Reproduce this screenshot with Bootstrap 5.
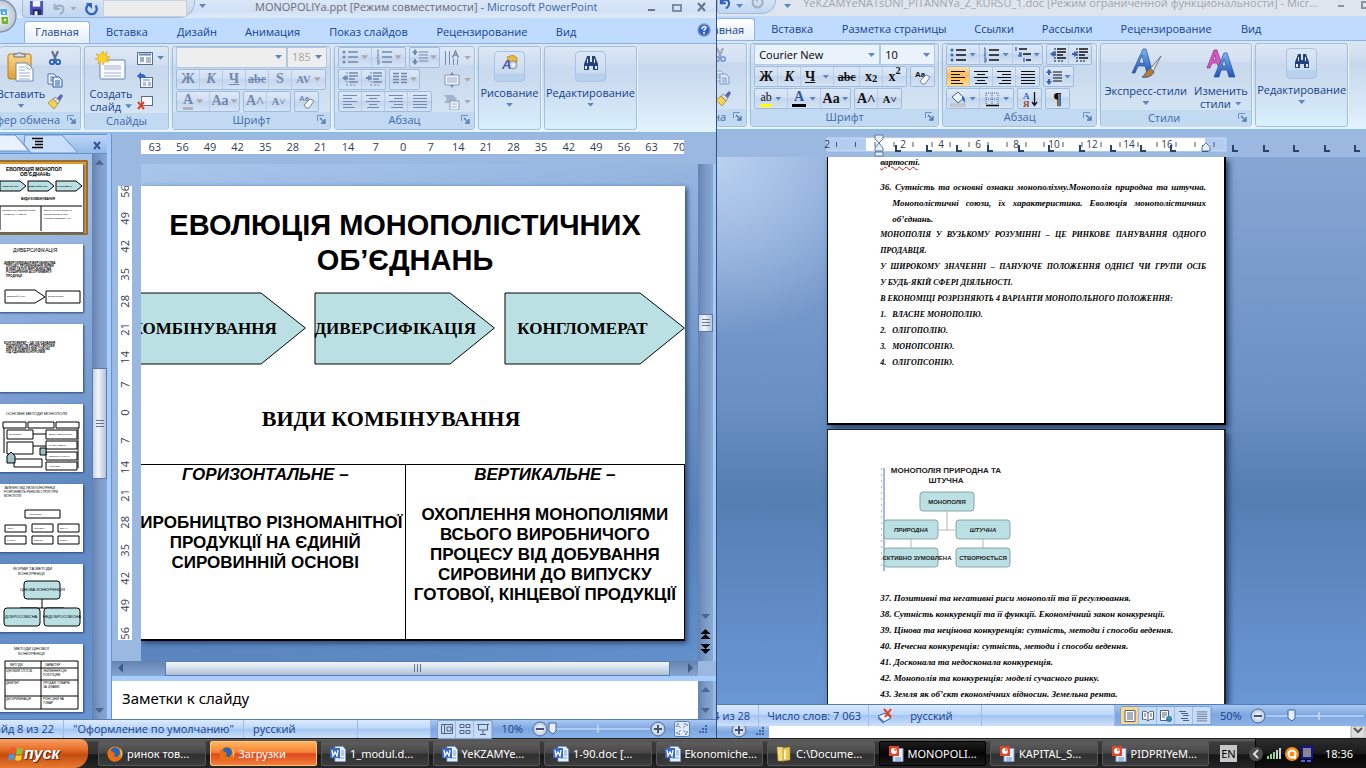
<!DOCTYPE html>
<html lang="ru">
<head>
<meta charset="utf-8">
<meta name="viewport" content="width=device-width, initial-scale=1">
<title>MONOPOLIYa.ppt - Microsoft PowerPoint</title>
<link href="https://cdn.jsdelivr.net/npm/bootstrap@5.3.0/dist/css/bootstrap.min.css" rel="stylesheet">
<style>
  :root { --ink:#15428b; --edge:#8db2e3; --ui:"Open Sans","Noto Sans",sans-serif; --tah:"Noto Sans","Open Sans",sans-serif; }
  body { font:11px/16px var(--ui); color:var(--ink); background:#6f9bd6; overflow:hidden; }
  svg { display:block; flex-shrink:0; }
  button, select { font:inherit; color:inherit; }
  button { border:0; background:none; padding:0; }
  .i16 { width:16px; height:16px; }
  .i32 { width:32px; height:32px; }
  .lh1 { line-height:14px; }
  .stack { display:flex; flex-direction:column; gap:6px; padding-top:3px; }
  .ppt { flex:0 0 717px; width:52.5%; border-right:1px solid #33517d; background:#bfdbff; }
  .word { background:#bfdbff; }
  /* title bars */
  .titlebar { background:linear-gradient(#dbe8f8,#d0e0f4 60%,#e0ebf9); border-bottom:1px solid #c4d9f3; }
  .ppt .titlebar { height:20px; color:#6c6c74; }
  .word .titlebar { height:17px; background:#dfe5ee; color:#a2a5aa; }
  .qat { height:18px; border:1px solid #9fbbe0; border-top:0; border-radius:0 0 16px 4px; background:linear-gradient(#d5e4f6,#c2d6f0); }
  .orb { left:-18px; top:-3px; width:36px; height:38px; z-index:2; }
  .fieldgray { height:17px; width:84px; background:#ececec; border:1px solid #c4d0de; appearance:none; }
  /* ribbon tabs */
  .tabs { height:25px; background:#bfdbff; border-bottom:1px solid #8db2e3; }
  .word .tabs { height:24px; }
  .tabs button { height:22px; color:var(--ink); white-space:nowrap; }
  .tabs .on { background:linear-gradient(#fff,#e4eefa); border:1px solid #8db2e3; border-bottom:0; border-radius:3px 3px 0 0; }
  /* ribbon */
  .ribbon { height:90px; padding:2px 0 2px 0; gap:3px; background:linear-gradient(#dbe6f4,#cfdded 20%,#c7d8ed 25%,#dbeaf9 80%,#e3f4ff); border-bottom:2px solid #8fbbe2; }
  .grp { border:1px solid #a0c0dc; border-radius:3px; background:linear-gradient(#dee8f5,#d3e0f1 20%,#c7d8ed 24%,#d8e8f5); box-shadow:1px 1px 0 #eef5fc; flex-shrink:0; }
  .grp > footer { height:17px; line-height:16px; background:#c1d9f1; color:#3e6aaa; text-align:center; position:relative; white-space:nowrap; flex-shrink:0; }
  .launch { position:absolute; right:4px; top:3px; width:9px; height:9px; }
  .g-body { padding:0 3px; }
  .tools { display:inline-flex; height:21px; border:1px solid #9ebce0; border-radius:2px; background:linear-gradient(#dce8f7,#d0dff2 45%,#c3d5ec 50%,#d5e4f5); }
  .tools > button { width:23px; display:flex; align-items:center; justify-content:center; border-right:1px solid #b5cbe8; }
  .tools > button:last-child { border-right:0; }
  .tools > .wide { width:33px; gap:3px; }
  .tools > .mid { width:29px; gap:2px; }
  .tools .hot { background:linear-gradient(#fde0a8,#fdb75c 45%,#ffe08a); }
  .rows { display:flex; flex-direction:column; gap:1px; }
  .rows > div { display:flex; gap:3px; height:21px; }
  .dim { color:#7288ae; --c1:#7288ae; --c2:#7288ae; }
  .lit { color:#111; --c1:#111; --c2:#3563bd; }
  .car { width:7px; height:4px; background:#5d86bd; clip-path:polygon(0 0,100% 0,50% 100%); flex-shrink:0; }
  .dim .car { background:#a9a9ae; }
  .ser { font:bold 14px/18px "Liberation Serif",serif; }
  .combo { appearance:none; height:21px; border:1px solid #b0c8e6; border-radius:0; padding:0 4px; background:#eaf2fb url("data:image/svg+xml,%3Csvg xmlns='http://www.w3.org/2000/svg' width='7' height='4'%3E%3Cpath d='M0 0h7L3.5 4z' fill='%235d86bd'/%3E%3C/svg%3E") no-repeat right 4px center; color:#000; }
  .combo:disabled { background-color:#eee; color:#a5a5a5; opacity:1; }
  .big { display:flex; flex-direction:column; align-items:center; text-align:center; line-height:13px; color:var(--ink); white-space:nowrap; }
  .tile { width:31px; height:31px; border:1px solid #a9c3e0; border-radius:4px; background:linear-gradient(#dbe7f5,#cbdcf0 70%,#b8d1ec 75%); display:flex; align-items:center; justify-content:center; padding-bottom:6px; }
  .tall { background:linear-gradient(#dee8f5,#c9d9ee 28%,#cfe0f2 60%,#d8f0fc); }
  /* outline pane */
  .pane { flex:0 0 107px; }
  .pane-head { height:20px; background:linear-gradient(#bcd6f7,#93b9e8); border-top:1px solid #6593cf; border-bottom:1px solid #6593cf; }
  .thumbs { flex:1 1 0; background:linear-gradient(165deg,#a9c6eb,#7ca0d2 40%,#5f88c0 60%,#6894d0); padding-top:6px; }
  .thumbs svg { width:85px; height:68px; margin-left:-2px; background:#fff; box-shadow:1px 1px 2px #2c4a78; font-family:"Liberation Sans",sans-serif; }
  .thumbs .slot { height:80px; padding-top:4px; }
  .thumbs .sel { height:75px; width:88px; border:2px solid #96702e; border-left:0; background:#e59a36; margin-bottom:5px; padding-top:2px; border-radius:0 2px 2px 0; }
  .vbar { width:15px; flex-shrink:0; background:linear-gradient(90deg,#6583b0,#7b9ac8 50%,#88a8d4); display:flex; flex-direction:column; align-items:center; padding:6px 0; }
  .arr { width:9px; height:5px; background:#4a668f; clip-path:polygon(50% 0,100% 100%,0 100%); flex-shrink:0; }
  .arr.dn { transform:rotate(180deg); }
  .grip { background:linear-gradient(90deg,#c5d2e2,#f2f6fa 40%,#b3c3d8); border:1px solid #5d7aa8; width:15px; display:flex; align-items:center; justify-content:center; flex-shrink:0; }
  .split { flex:0 0 5px; background:#a9cdff; border-right:1px solid #6593cf; }
  /* slide area */
  .ruler-bg { background:#9ab8e0; }
  .hruler { height:14px; background:#fff; overflow:hidden; }
  .hruler > div { width:552px; display:flex; line-height:14px; font-size:11px; color:#333c52; }
  .hruler span { flex:1; text-align:center; }
  .vruler { width:14px; flex-shrink:0; background:#fff; overflow:hidden; display:flex; align-items:center; margin:22px 9px 21px 6px; }
  .vruler > div { height:470px; width:14px; flex-shrink:0; display:flex; flex-direction:column; font-size:11px; color:#333c52; }
  .vruler span { flex:1; width:14px; text-align:center; writing-mode:vertical-rl; transform:rotate(180deg); line-height:14px; }
  .canvas { background:linear-gradient(170deg,#a9c6eb,#7b9fd0 40%,#5680b8 75%,#6390cb); padding:22px 13px 20px 0; min-width:0; }
  .slide { background:#fff; overflow:hidden; color:#000; box-shadow:2px 2px 5px #26456f; border-bottom:1px solid #000; }
  .slide-in { margin-left:-16px; }
  .slide h1 { font:bold 29px/35px "Liberation Sans",sans-serif; text-align:center; padding-top:22px; margin:0; }
  .slide h2 { font:bold 22px/28px "Liberation Serif",serif; text-align:center; padding-right:28px; margin:40px 0 31px; }
  .chev { height:73px; font:bold 17px/73px "Liberation Serif",serif; position:relative; flex:1 1 0; min-width:0; text-align:center; padding-right:24px; white-space:nowrap; }
  .chev svg { position:absolute; inset:0; width:100%; height:100%; z-index:0; }
  .chev span { position:relative; }
  .kinds { width:100%; table-layout:fixed; border-collapse:collapse; font:bold 17px/20px "Liberation Sans",sans-serif; text-align:center; }
  .kinds td { border:1px solid #000; vertical-align:top; height:175px; padding:0; white-space:nowrap; }
  .hbar { height:16px; background:linear-gradient(#6583b0,#86a5d2); }
  .hgrip { height:15px; background:linear-gradient(#f0f5fa,#d8e2ee 40%,#aebfd6); border:1px solid #5d7aa8; }
  .notes { height:38px; background:#fff; color:#000; font:15px/34px var(--tah); }
  /* status bars */
  .status { background:linear-gradient(#dcebff,#bdd6f8 45%,#a4c5f2 50%,#cce0fb); border-top:1px solid #567db1; color:var(--ink); white-space:nowrap; flex-shrink:0; }
  .status > div { border-right:1px solid #9ebce5; height:100%; display:flex; align-items:center; flex-shrink:0; }
  .status > .flex-grow-1 { flex-shrink:1; }
  .zoomer { background:linear-gradient(#a8c8f2,#7da6e0 50%,#8db4ea); }
  .views { border:1px solid #7fa3d2; border-radius:2px; background:#c6dcf7; display:flex; }
  .views button { width:18px; height:17px; display:flex; align-items:center; justify-content:center; border-right:1px solid #9bbce6; color:#51617c; }
  /* word document */
  .desk { background:radial-gradient(circle at 0 0,#bad2f1 0,transparent 180px),linear-gradient(#86a6d4,#6a8fc3 45%,#557eb2 62%,#6a97d5); padding:0 140px 0 110px; overflow:hidden; }
  .sheet { background:#fff; color:#000; border:1px solid #000; border-width:0 2px 2px 1px; box-shadow:3px 3px 6px #223f69; padding:0 18px 0 52px; font:italic bold 9px/16px "Liberation Serif",serif; }
  .sheet p { margin:0; text-align:justify; text-align-last:left; }
  .sheet .fill { text-align-last:justify; white-space:nowrap; }
  .caps { font-size:8px; }
  .sheet ol { margin:0; padding:0; list-style:none; white-space:nowrap; }
  .num { display:inline-block; width:12px; }
  /* taskbar */
  .taskbar { height:30px; flex-shrink:0; background:linear-gradient(#6a6a6a,#3c3c3c 12%,#333 50%,#151515 55%,#262626); border-top:1px solid #1c1c1c; font:11px/16px var(--tah); color:#fff; }
  .start { width:88px; border-radius:0 8px 14px 0; background:linear-gradient(#f7a166,#e8702a 35%,#c44d10 55%,#e87a30); color:#fff; font:italic bold 16px/20px "Liberation Sans",sans-serif; text-shadow:1px 1px 1px #421; }
  .task { flex:1 1 0; min-width:0; height:25px; display:flex; align-items:center; gap:4px; padding-left:8px; border:1px solid #555; border-radius:2px; background:linear-gradient(#5d5d5d,#484848 48%,#303030 52%,#3c3c3c); color:#fff; white-space:nowrap; overflow:hidden; }
  .task.alert-on { background:linear-gradient(#ffb55a,#f6813a 45%,#e0481d 52%,#f0803a); border-color:#ffc27a; }
  .task.now { background:linear-gradient(#1d1d1d,#050505 50%,#1a1a1a); border-color:#000; }
  .tray { background:linear-gradient(#2c2c2c,#1a1a1a 50%,#050505 55%,#111); border-left:1px solid #000; }
  .lang { background:#c8c8c8; color:#000; width:17px; height:17px; font-size:11px; line-height:17px; text-align:center; }
</style>
</head>
<body class="vh-100 d-flex flex-column">

<svg width="0" height="0" class="position-absolute" aria-hidden="true">
  <defs>
    <linearGradient id="gy" x2="0" y2="1"><stop stop-color="#fbd98a"/><stop offset="1" stop-color="#e0a030"/></linearGradient>
    <linearGradient id="gb" x2="0" y2="1"><stop stop-color="#7db4f2"/><stop offset="1" stop-color="#2353b5"/></linearGradient>
    <radialGradient id="gw"><stop stop-color="#fff"/><stop offset="1" stop-color="#b9c6d8"/></radialGradient>
  </defs>
  <symbol id="save" viewBox="0 0 16 16"><path d="M1 0h14v15H2l-1-1z" fill="#4a50b8"/><path d="M4 0h8v6H4z" fill="#eef3fb"/><path d="M4 9h9v6H4z" fill="#222a66"/><path d="M6 11h3v4H6z" fill="#fff"/></symbol>
  <symbol id="undo" viewBox="0 0 16 16"><path d="M3 2v6h6" fill="none" stroke="currentColor" stroke-width="2.4"/><path d="M4 7c2-4 9-4 9 1 0 3-2 5-4 6" fill="none" stroke="currentColor" stroke-width="2.4"/></symbol>
  <symbol id="redo" viewBox="0 0 16 16"><path d="M4 3a6 6 0 1 0 8 1" fill="none" stroke="currentColor" stroke-width="2.6"/><path d="M1 1h7v7z" fill="currentColor"/></symbol>
  <symbol id="paste" viewBox="0 0 32 32"><rect x="3" y="3" width="23" height="25" rx="2" fill="url(#gy)" stroke="#b67c22"/><path d="M9 5V3h3a3 3 0 0 1 5 0h3v3H9z" fill="#d9dde2" stroke="#646c76"/><path d="M11 12h11l6 6v12H11z" fill="#fff" stroke="#6b89b5"/><path d="M22 12v6h6M14 16h6m-6 3h6m-6 3h11m-11 3h11m-11 3h11" fill="none" stroke="#8fb0d8"/></symbol>
  <symbol id="cut" viewBox="0 0 16 16"><path d="M5 1l4 9M11 1L7 10" stroke="#5d6f8c" stroke-width="2" fill="none"/><circle cx="5" cy="12" r="2.2" fill="none" stroke="#2a5fc0" stroke-width="1.8"/><circle cx="11" cy="12" r="2.2" fill="none" stroke="#2a5fc0" stroke-width="1.8"/></symbol>
  <symbol id="copy" viewBox="0 0 16 16"><path d="M1 2h6l3 3v7H1z" fill="#fff" stroke="#4472b8"/><path d="M3 5h3m-3 2h5m-5 2h5" stroke="#4472b8"/><path d="M6 5h6l3 3v7H6z" fill="#e9f2ff" stroke="#2a5cae"/><path d="M8 9h5m-5 2h5m-5 2h5" stroke="#2a5cae"/></symbol>
  <symbol id="brush" viewBox="0 0 16 16"><path d="M1 9l5-4 5 5-4 5c-2-2-4-4-6-6z" fill="#f3d24e" stroke="#9f7d1c" stroke-width=".7"/><path d="M6 5l2-2 5 4-2 3z" fill="#d8dce2" stroke="#666" stroke-width=".6"/><path d="M10 4l4-4 2 2-3 5z" fill="#5d63b5"/></symbol>
  <symbol id="newslide" viewBox="0 0 32 32"><rect x="5" y="9" width="25" height="19" rx="1" fill="#f8fbff" stroke="#6d83a7"/><path d="M9 14h17v5H9z" fill="#cdd7e8"/><path d="M9 22h17m-17 3h17" stroke="#a7b6d0"/><path d="M8 0l1 4 3-3-1 4 4 1-4 2 3 3-4-1-2 4-1-4-4 3 1-4-4-1 4-2-3-3 4 1z" fill="#ffd32a" stroke="#e39d00" stroke-width=".6"/></symbol>
  <symbol id="layout" viewBox="0 0 16 16"><rect x=".5" y="2.500" width="15" height="12" fill="#f4f8fd" stroke="#5a6c8c"/><path d="M2 4.500h12" stroke="#6a86b6" stroke-width="2"/><path d="M3 7h4v5H3z" fill="#9dacc5"/><path d="M9 8h5m-5 2h5m-5 2h5" stroke="#6a7c9c"/></symbol>
  <symbol id="reset" viewBox="0 0 16 16"><rect x="3.500" y="5.500" width="12" height="10" fill="#f4f8fd" stroke="#5a6c8c"/><path d="M6 8h7m-7 3h3m2 0h3m-8 2h3m2 0h3" stroke="#6a86b6"/><path d="M0 4l4-4v2c4 0 5 2 5 5-1-2-2-2-5-2v3z" fill="#2d67c9"/></symbol>
  <symbol id="del" viewBox="0 0 16 16"><rect x="4.500" y="2.500" width="11" height="9" fill="#f4f8fd" stroke="#5a6c8c"/><path d="M1 8l6 7M7 8l-6 7" stroke="#e33d20" stroke-width="2"/></symbol>
  <symbol id="launch" viewBox="0 0 9 9"><path d="M.5 6V.5H7" fill="none" stroke="#6d92c4"/><path d="M3 3l4 4M8 4v4H4" fill="none" stroke="#4d76b0" stroke-width="1.400"/></symbol>
  <symbol id="bul" viewBox="0 0 16 16"><path d="M6 3h10M6 8h10M6 13h10" stroke="var(--c1)" stroke-width="1.300"/><g fill="var(--c2)"><circle cx="2" cy="3" r="1.500"/><circle cx="2" cy="8" r="1.500"/><circle cx="2" cy="13" r="1.500"/></g></symbol>
  <symbol id="numl" viewBox="0 0 16 16"><path d="M6 3h10M6 8h10M6 13h10" stroke="var(--c1)" stroke-width="1.300"/><path d="M1 1h1v4M1 6h2L1 9h2M1 11h2v2H1m2 0v2H1" stroke="var(--c2)" fill="none"/></symbol>
  <symbol id="multi" viewBox="0 0 16 16"><path d="M4 2h8M8 7h8M11 13h5" stroke="var(--c1)" stroke-width="1.300"/><path d="M1 0v4M4 6h2v3H4V8h2M9 11v4" stroke="var(--c2)" fill="none" stroke-width="1.300"/></symbol>
  <symbol id="sp" viewBox="0 0 16 16"><path d="M7 3h9M7 6h9M7 9h9M7 12h9" stroke="var(--c1)" stroke-width="1.200"/><path d="M3 0l3 4H4v2H2V4H0zM3 16l3-4H4v-2H2v2H0z" fill="var(--c2)"/></symbol>
  <symbol id="al" viewBox="0 0 16 16"><path d="M1 2.500h14M1 5.500h9M1 8.500h14M1 11.500h9M1 14.500h12" stroke="currentColor"/></symbol>
  <symbol id="ac" viewBox="0 0 16 16"><path d="M1 2.500h14M4 5.500h8M1 8.500h14M4 11.500h8M2 14.500h12" stroke="currentColor"/></symbol>
  <symbol id="ar" viewBox="0 0 16 16"><path d="M1 2.500h14M6 5.500h9M1 8.500h14M6 11.500h9M3 14.500h12" stroke="currentColor"/></symbol>
  <symbol id="aj" viewBox="0 0 16 16"><path d="M1 2.500h14M1 5.500h14M1 8.500h14M1 11.500h14M1 14.500h14" stroke="currentColor"/></symbol>
  <symbol id="out" viewBox="0 0 16 16"><path d="M7 2h9M7 5h9M7 8h6M7 11h9" stroke="var(--c1)" stroke-width="1.500"/><path d="M5 1v14M8 14h5" stroke="var(--c1)" stroke-dasharray="2 1"/><path d="M0 7l4-3v2h2v2H4v2z" fill="var(--c2)"/></symbol>
  <symbol id="in" viewBox="0 0 16 16"><path d="M7 2h9M7 5h9M7 8h6M7 11h9" stroke="var(--c1)" stroke-width="1.500"/><path d="M5 1v14M8 14h5" stroke="var(--c1)" stroke-dasharray="2 1"/><path d="M6 7L2 4v2H0v2h2v2z" fill="var(--c2)"/></symbol>
  <symbol id="cols" viewBox="0 0 16 16"><path d="M1 2.500h6M1 5.500h6M1 8.500h6M1 11.500h6M9 2.500h6M9 5.500h6M9 8.500h6M9 11.500h6" stroke="currentColor" stroke-width="1.500"/></symbol>
  <symbol id="tdir" viewBox="0 0 16 16"><path d="M1.500 1v14M5.500 1v14M9.500 9v6M13.500 9v6" stroke="currentColor"/><path d="M8.500 8L11.500 1l3 7M9.500 5h4" fill="none" stroke="currentColor" stroke-width="1.300"/></symbol>
  <symbol id="valign" viewBox="0 0 16 16"><path d="M1 3h14v10H1z" fill="#eef4fb" stroke="#8798b5"/><path d="M3 6h10M3 8h10M3 10h10" stroke="#9aabc5"/><path d="M8 0l2 3H6zM8 16l2-3H6z" fill="currentColor"/></symbol>
  <symbol id="smart" viewBox="0 0 16 16"><path d="M0 1h9l4 4-4 4H0l3-4z" fill="#a4b3cd"/><path d="M6 7h9v9H6z" fill="#f0f5fb" stroke="#8a9bb8"/><path d="M8 10h5m-5 3h5" stroke="#9aabc5"/></symbol>
  <symbol id="clear" viewBox="0 0 16 16"><text x="0" y="8" font-size="8" font-weight="bold" font-family="Liberation Sans,sans-serif" fill="currentColor">Aa</text><path d="M5 12l6-6 4 2-5 7H7z" fill="#f8fafd" stroke="#7385a5"/></symbol>
  <symbol id="draw" viewBox="0 0 16 16"><path d="M5 2l6-2 4 3v4H7z" fill="#e8b93a" stroke="#9a741b" stroke-width=".6"/><circle cx="11" cy="10" r="4" fill="url(#gw)" stroke="#6b7380" stroke-width=".6"/><text x="0" y="14" font-size="13" font-weight="bold" font-style="italic" font-family="Liberation Sans,sans-serif" fill="#4c57b8">A</text></symbol>
  <symbol id="bino" viewBox="0 0 16 16"><path d="M1 15V9l2-5 1-3h3v6h2V1h3l1 3 2 5v6h-5v-4H6v4z" fill="#24437d"/><path d="M2 11h2v3H2zm10 0h2v3h-2zM4 4h1v4H4zm7 0h1v4h-1z" fill="#e4eefc"/></symbol>
  <symbol id="bigA" viewBox="0 0 32 32"><path d="M2 25L13 1h3l7 24h-6l-2-7H8l-3 7zm7-10h5l-2-8z" fill="url(#gb)" stroke="#2a5598" stroke-width=".7"/><path d="M31 8L20 21l3 3z" fill="#d9dee5" stroke="#747b85"/><path d="M20 20l4 4c-2 4-6 6-12 5 3-1 3-5 8-9z" fill="#c07a30" stroke="#315b9b"/></symbol>
  <symbol id="twoA" viewBox="0 0 32 32"><path d="M2 20L9 2h3l6 18h-4l-2-5H7l-2 5zm6-8h3l-1-5z" fill="#d458c0" stroke="#8e2a80" stroke-width=".7"/><path d="M9 29L19 5h3l8 24h-6l-2-7h-6l-2 7zm8-11h4l-2-7z" fill="url(#gb)" stroke="#2a5598" stroke-width=".7"/></symbol>
  <symbol id="bucket" viewBox="0 0 16 16"><path d="M2 6l6-5 6 6-6 5z" fill="#eef4fb" stroke="#49628c"/><path d="M12 5c3 1 3 4 3 7l-3-4z" fill="#2d62bf"/><path d="M0 13h15v3H0z" fill="#cfcfcf" stroke="#999" stroke-width=".5"/></symbol>
  <symbol id="bord" viewBox="0 0 16 16"><path d="M2 2h12v12M2 2v12M8 2v12M2 8h12" fill="none" stroke="#4b69a0" stroke-dasharray="1 1"/><path d="M2 14.500h13" stroke="#000" stroke-width="1.500"/></symbol>
  <symbol id="sort" viewBox="0 0 16 16"><text x="1" y="8" font-size="9" font-weight="bold" font-family="Liberation Serif,serif" fill="#2c5cc0">А</text><text x="1" y="16" font-size="9" font-weight="bold" font-family="Liberation Serif,serif" fill="#a03d2c">Я</text><path d="M12.500 1v13M10 11l2.500 3.500L15 11" fill="none" stroke="#111" stroke-width="1.300"/></symbol>
  <symbol id="docv" viewBox="0 0 12 12"><path d="M1 .5h10v11H1z" fill="#fff" stroke="currentColor"/><path d="M3 3h6M3 5h6M3 7h6M3 9h6" stroke="currentColor"/></symbol>
  <symbol id="normv" viewBox="0 0 12 12"><path d="M.5 1.500h11v9H.5zM3.500 2v8M6 4h4v4H6z" fill="none" stroke="currentColor"/></symbol>
  <symbol id="sortv" viewBox="0 0 12 12"><path d="M1 1.500h4v3H1zM7 1.500h4v3H7zM1 7.500h4v3H1zM7 7.500h4v3H7z" fill="none" stroke="currentColor"/></symbol>
  <symbol id="showv" viewBox="0 0 12 12"><path d="M0 1.500h12M1.500 2v5h9V2M6 7v4M3 11.500h6" fill="none" stroke="currentColor"/></symbol>
  <symbol id="bookv" viewBox="0 0 12 12"><path d="M6 3C4 1 2 1 .5 1.500v8C2 9 4 9 6 11c2-2 4-2 5.500-1.500v-8C10 1 8 1 6 3zv8M2 4h2M2 6h2M8 4h2M8 6h2" fill="#fff" stroke="currentColor"/></symbol>
  <symbol id="webv" viewBox="0 0 12 12"><path d="M.5.5h8v10h-8z" fill="#fff" stroke="currentColor"/><path d="M2 3h5M2 5h5M2 7h3" stroke="currentColor"/><circle cx="9" cy="9" r="3" fill="#2d7fc0"/><path d="M8 7l2 1-1 2z" fill="#56b24a"/></symbol>
  <symbol id="outv" viewBox="0 0 12 12"><path d="M1 1.500h7M3 3.500h7M5 5.500h6M3 8.500h7M5 10.500h6" stroke="currentColor"/></symbol>
  <symbol id="minus" viewBox="0 0 16 16"><circle cx="8" cy="8" r="7" fill="url(#gw)" stroke="#4a6ca0"/><path d="M4 8h8" stroke="#3e5680" stroke-width="2"/></symbol>
  <symbol id="plus" viewBox="0 0 16 16"><circle cx="8" cy="8" r="7" fill="url(#gw)" stroke="#4a6ca0"/><path d="M4 8h8M8 4v8" stroke="#3e5680" stroke-width="2"/></symbol>
  <symbol id="fit" viewBox="0 0 16 16"><rect x=".5" y=".5" width="15" height="15" rx="2" fill="#dfeafb" stroke="#5a7db2"/><path d="M3 6V3h3M10 3h3v3M13 10v3h-3M6 13H3v-3M5 5l2 2M11 5L9 7M5 11l2-2M11 11L9 9" fill="none" stroke="#49607f" stroke-dasharray="2 1"/></symbol>
  <symbol id="size" viewBox="0 0 10 10"><path d="M7 1h2v2H7zM7 4h2v2H7zM4 4h2v2H4zM7 7h2v2H7zM4 7h2v2H4zM1 7h2v2H1z" fill="#3f68a8"/></symbol>
  <symbol id="ff" viewBox="0 0 16 16"><circle cx="8" cy="8" r="7.500" fill="#f08a1c"/><circle cx="8" cy="6.500" r="5" fill="#2c62b8"/><path d="M1 4c2 1 3 0 5 2l2 1-1 2c1 3 5 3 7 0 0 4-3 7-7 6.500C3 15 0 11 1 4z" fill="#e96f12"/><path d="M13 2c3 3 3 7 1 10 0-4 0-6-1-10z" fill="#fcc33c"/></symbol>
  <symbol id="wd" viewBox="0 0 16 16"><path d="M5 .5h8l2.500 3v12H5z" fill="#e9f1fd" stroke="#7e9ccb"/><path d="M11 5h3m-3 2h3m-3 2h3m-7 3h7" stroke="#7e9ccb"/><path d="M0 2h10v10H0z" fill="#3a69bd"/><path d="M2 4l1 6 2-4 2 4 1-6" fill="none" stroke="#fff" stroke-width="1.300"/></symbol>
  <symbol id="pp" viewBox="0 0 16 16"><path d="M5 2.500h10v13H5z" fill="#eaf1fb" stroke="#7e9ccb"/><path d="M7 12h6m-6 2h6" stroke="#5b89c8"/><path d="M1 0h10v10H1z" fill="#d9482a"/><circle cx="6" cy="5" r="3" fill="#fff"/><path d="M6 5V2a3 3 0 0 1 3 3z" fill="#e98b6c"/></symbol>
  <symbol id="fold" viewBox="0 0 16 16"><path d="M1 1h6l1 14H2z" fill="#f6dc7b" stroke="#a8873a" stroke-width=".6"/><path d="M7 2l7-1v13l-7 1z" fill="#ecc652" stroke="#a8873a" stroke-width=".6"/><path d="M9 4v9" stroke="#fff6c7" stroke-width="2"/></symbol>
  <symbol id="flag" viewBox="0 0 16 16"><path d="M2 2c2-1 4-1 6 0L7 8C5 7 3 7 1 8z" fill="#ef5a28"/><path d="M9 2c2 1 4 1 6 0l-1 6c-2 1-4 1-6 0z" fill="#8ac53e"/><path d="M1 9c2-1 4-1 6 0l-1 5C4 13 2 13 0 14z" fill="#4a9ae8"/><path d="M8 9c2 1 4 1 6 0l-1 5c-2 1-4 1-6 0z" fill="#fbcb2d"/></symbol>
</svg>

<main class="d-flex flex-grow-1" style="min-height:0">
  <!-- PowerPoint window -->
  <section class="ppt d-flex flex-column position-relative">
    <svg class="orb position-absolute" viewBox="0 0 36 38"><circle cx="18" cy="19" r="16" fill="url(#gw)" stroke="#8795ab" stroke-width="1.500"/><path d="M18 12h7v6h-6z" fill="#5aa9e8"/><path d="M19 20h7v7h-6z" fill="#77b82a"/><path d="M10 12h7v7h-7z" fill="#ef6b2a"/><path d="M21 15h2v2h-2zM22 22h2v2h-2z" fill="#fff"/></svg>
    <header class="titlebar d-flex align-items-start">
      <div class="qat d-flex align-items-center" style="margin-left:22px;width:173px;padding-left:6px">
        <button aria-label="Сохранить"><svg width="15" height="15"><use href="#save"/></svg></button>
        <button class="ms-2" aria-label="Отменить" style="color:#9fb0c8"><svg width="14" height="14"><use href="#undo"/></svg></button>
        <span class="dim ms-1"><i class="car d-block"></i></span>
        <button class="ms-2" aria-label="Повторить" style="color:#2f62b8"><svg width="14" height="14"><use href="#redo"/></svg></button>
        <select class="fieldgray ms-1" aria-label="Команда" disabled></select>
      </div>
      <i class="car mt-1 ms-1"></i>
      <div class="flex-grow-1 text-nowrap lh1" style="padding-left:49px">MONOPOLIYa.ppt [Режим совместимости] <span style="color:#3e6aaa">- Microsoft PowerPoint</span></div>
      <svg width="70" height="16" viewBox="0 0 70 16" fill="none" stroke="#66758d" stroke-width="2"><path d="M2 10h7"/><path d="M27 5h8v6h-8zM26 5h10" stroke-width="1.500"/><path d="M52 3l7 8M59 3l-7 8"/></svg>
    </header>
    <nav class="tabs d-flex align-items-end">
      <button class="on" style="margin-left:24px;width:66px">Главная</button>
      <button style="width:74px">Вставка</button><button style="width:66px">Дизайн</button>
      <button style="width:85px">Анимация</button><button style="width:107px">Показ слайдов</button>
      <button style="width:120px">Рецензирование</button><button style="width:48px">Вид</button>
      <button class="ms-auto me-1" aria-label="Справка"><svg width="16" height="20" viewBox="0 0 16 20"><circle cx="8" cy="8" r="6" fill="#2e62cf" stroke="#8795ad" stroke-width="1.500"/><path d="M6 7c0-3 4-3 4-1 0 1-2 1-2 3M8 10v2" fill="none" stroke="#fff" stroke-width="1.500"/></svg></button>
    </nav>
    <div class="ribbon d-flex">
      <div class="grp d-flex flex-column border-start-0" style="width:81px">
        <div class="flex-grow-1 d-flex justify-content-between">
          <div class="big" style="width:42px"><svg class="i32 mt-1"><use href="#paste"/></svg><span style="padding-top:4px">Вставить</span><i class="car mt-1"></i></div>
          <div class="stack" style="width:33px"><svg class="i16"><use href="#cut"/></svg><svg class="i16"><use href="#copy"/></svg><svg class="i16"><use href="#brush"/></svg></div>
        </div>
        <footer class="d-flex justify-content-end overflow-hidden" style="padding-right:20px">Буфер обмена<svg class="launch"><use href="#launch"/></svg></footer>
      </div>
      <div class="grp d-flex flex-column" style="width:85px">
        <div class="flex-grow-1 d-flex justify-content-between">
          <button class="big" style="width:54px"><svg class="i32 mt-1"><use href="#newslide"/></svg><span style="padding-top:4px">Создать</span><span class="d-flex align-items-center gap-1">слайд <i class="car"></i></span></button>
          <div class="stack" style="width:32px"><span class="d-flex align-items-center gap-1"><svg class="i16"><use href="#layout"/></svg><i class="car"></i></span><svg class="i16"><use href="#reset"/></svg><svg class="i16"><use href="#del"/></svg></div>
        </div>
        <footer>Слайды</footer>
      </div>
      <div class="grp d-flex flex-column dim" style="width:159px">
        <div class="g-body rows flex-grow-1">
          <div class="gap-0"><select class="combo" aria-label="Шрифт" disabled style="width:111px"></select><select class="combo" aria-label="Размер" disabled style="width:40px"><option>185</option></select></div>
          <div><div class="tools ser"><button>Ж</button><button><i>К</i></button><button><u>Ч</u></button><button><s style="font-size:12px">abc</s></button><button>S</button><button class="wide" style="font-size:11px">AV<i class="car"></i></button></div></div>
          <div><div class="tools ser"><button class="wide"><span style="border-bottom:3px solid #b0b0b0;line-height:14px">A</span><i class="car"></i></button><button class="mid">Aa<i class="car"></i></button></div><div class="tools ser"><button>A˄</button><button style="font-size:11px">A˅</button></div><div class="tools"><button><svg class="i16"><use href="#clear"/></svg></button></div></div>
        </div>
        <footer>Шрифт<svg class="launch"><use href="#launch"/></svg></footer>
      </div>
      <div class="grp d-flex flex-column dim" style="width:141px">
        <div class="d-flex g-body flex-grow-1 justify-content-between">
        <div class="rows">
          <div><div class="tools"><button class="wide"><svg class="i16"><use href="#bul"/></svg><i class="car"></i></button><button class="wide"><svg class="i16"><use href="#numl"/></svg><i class="car"></i></button></div><div class="tools"><button class="mid"><svg class="i16"><use href="#sp"/></svg><i class="car"></i></button></div></div>
          <div><div class="tools"><button><svg class="i16"><use href="#out"/></svg></button><button><svg class="i16"><use href="#in"/></svg></button></div><div class="tools"><button class="mid"><svg class="i16"><use href="#cols"/></svg><i class="car"></i></button></div></div>
          <div><div class="tools"><button><svg class="i16"><use href="#al"/></svg></button><button><svg class="i16"><use href="#ac"/></svg></button><button><svg class="i16"><use href="#ar"/></svg></button><button><svg class="i16"><use href="#aj"/></svg></button></div></div>
        </div>
        <div class="stack"><span class="d-flex align-items-center gap-1"><svg class="i16"><use href="#tdir"/></svg><i class="car"></i></span><span class="d-flex align-items-center gap-1"><svg class="i16"><use href="#valign"/></svg><i class="car"></i></span><span class="d-flex align-items-center gap-1"><svg class="i16"><use href="#smart"/></svg><i class="car"></i></span></div>
        </div>
        <footer>Абзац<svg class="launch"><use href="#launch"/></svg></footer>
      </div>
      <button class="grp tall big pt-1" style="width:63px"><span class="tile"><svg class="i16"><use href="#draw"/></svg></span><span class="pt-1">Рисование</span><i class="car mt-1"></i></button>
      <button class="grp tall big pt-1" style="width:93px"><span class="tile"><svg class="i16"><use href="#bino"/></svg></span><span class="pt-1">Редактирование</span><i class="car mt-1"></i></button>
    </div>

    <div class="d-flex flex-grow-1" style="min-height:0">
      <aside class="pane d-flex flex-column">
        <div class="pane-head"><svg width="106" height="18" viewBox="0 0 106 18"><path d="M-1 0h16l14 16H-1z" fill="#e8f2ff" stroke="#6593cf"/><path d="M25 0h37l16 18H31L24 9z" fill="#c9dff9" stroke="#6593cf"/><path d="M32 3.500h11M35 6.500h8M35 9.500h8M32 12.500h11" stroke="#000" stroke-width="1.500"/><path d="M94 7l6 7M100 7l-6 7" stroke="#33568f" stroke-width="2"/></svg></div>
        <div class="d-flex flex-grow-1" style="min-height:0">
          <div class="thumbs overflow-hidden">
            <div class="sel"><svg viewBox="0 0 85 68" font-size="5" font-weight="bold"><text x="8" y="7">ЕВОЛЮЦІЯ МОНОПОЛ</text><text x="22" y="12">ОБ’ЄДНАНЬ</text><g fill="#bbe0e3" stroke="#000"><path d="M2 17h20l6 5-6 5H2zM30 17h20l6 5-6 5H30zM58 17h20l6 5-6 5H58z"/></g><g font-size="2"><text x="4" y="23">КОМБІНУВАННЯ</text><text x="31" y="23">ДИВЕРСИФІКАЦІЯ</text><text x="59" y="23">КОНГЛОМЕРАТ</text></g><text x="23" y="36" font-size="3">ВИДИ КОМБІНУВАННЯ</text><path d="M2 66V42h82M43 42v25" fill="none" stroke="#000"/><g font-size="2" font-weight="normal"><text x="4" y="47">ГОРИЗОНТАЛЬНЕ ВИРОБНИЦТВО</text><text x="6" y="51">ПРОДУКЦІЇ НА ЄДИНІЙ</text><text x="46" y="47">ВЕРТИКАЛЬНЕ ОХОПЛЕННЯ</text><text x="46" y="51">ВСЬОГО ВИРОБНИЧОГО</text><text x="46" y="55">ПРОЦЕСУ ВІД ДОБУВАННЯ</text></g></svg></div>
            <div class="slot"><svg viewBox="0 0 85 68" font-size="5"><text x="15" y="8">ДИВЕРСИФІКАЦІЯ</text><g font-weight="bold" font-size="3"><text x="6" y="20">ДИВЕРСИФІКАЦІЯ ВИРОБНИЦТВА</text><text x="8" y="23">ПРОЦЕС ПРОНИКНЕННЯ ФІРМИ</text><text x="8" y="26">В ІНШІ ГАЛУЗІ ВИРОБНИЦТВА</text><text x="8" y="29">РОЗШИРЕННЯ АСОРТИМЕНТУ</text><text x="8" y="33">ПРОДУКЦІЇ</text></g><path d="M7 46h30l10 7-10 6H7zM48 47h34v12H48z" fill="none" stroke="#000"/><g font-size="2"><text x="9" y="53">ДИВЕРСИФІКАЦІЯ</text><text x="50" y="53">ВИРОБНИЦТВО</text></g></svg></div>
            <div class="slot"><svg viewBox="0 0 85 68" font-size="3" font-weight="bold"><text x="6" y="20">КОНГЛОМЕРАТ – ЦЕ ОБ’ЄДНАННЯ</text><text x="8" y="23">ПІДПРИЄМСТВ РІЗНИХ ГАЛУЗЕЙ</text><text x="8" y="26">НЕПОВ’ЯЗАНИХ МІЖ СОБОЮ</text><text x="8" y="29">ПІД ЄДИНИМ КОНТРОЛЕМ</text></svg></div>
            <div class="slot"><svg viewBox="0 0 85 68" font-size="4"><text x="8" y="11">ОСНОВНІ МЕТОДИ МОНОПОЛІЇ</text><path d="M5 18h23v6H5zM30 18h26v6H30zM58 18h23v6H58zM9 26h26v9H9zM9 38h26v12H9zM48 26h31v9H48zM48 37h31v8H48zM48 48h31v8H48zM48 58h31v8H48zM16 55h28v8H16zM6 24v25M80 24v40M35 30h13M35 42h13" fill="none" stroke="#000"/><path d="M42 44h6v7h-6zM9 52l4-4 4 4v7H9z" fill="#9bc2c5" stroke="#000"/><g font-size="2"><text x="11" y="31">ОЛІГОПОЛІЯ</text><text x="51" y="31">ВЕЛИКІ ПІДПРИЄМСТВА</text><text x="51" y="42">ЦІНОВА ПОЛІТИКА</text><text x="51" y="53">ОБМЕЖЕННЯ РИНКУ</text><text x="51" y="63">КОНТРОЛЬ</text></g></svg></div>
            <div class="slot"><svg viewBox="0 0 85 68" font-size="3"><text x="6" y="5">ЗАЛЕЖНО ВІД УМОВ КОНКУРЕНЦІЇ</text><text x="6" y="9">РОЗРІЗНЯЮТЬ РИНКОВІ СТРУКТУРИ</text><text x="6" y="13">МОНОПОЛІЇ</text><path d="M27 26h35v8H27zM7 41h21v7H7zM34 40h21v8H34zM60 40h21v8H60zM7 52h21v8H7zM34 52h21v8H34zM60 52h21v8H60z" fill="none" stroke="#000"/><g font-size="2"><text x="31" y="31">МОНОПОЛІЯ</text><text x="9" y="45">ЧИСТА</text><text x="36" y="45">ПРИРОДНА</text><text x="62" y="45">ШТУЧНА</text><text x="9" y="57">ЗАКРИТА</text><text x="36" y="57">ВІДКРИТА</text><text x="62" y="57">ПРОСТА</text></g></svg></div>
            <div class="slot"><svg viewBox="0 0 85 68" font-size="4"><text x="15" y="6">ФОРМИ ТА МЕТОДИ</text><text x="20" y="11">КОНКУРЕНЦІЇ</text><path d="M44 35v9M22 44h44M22 44v3M66 44v3" stroke="#000"/><g fill="#bbe0e3" stroke="#000"><rect x="26" y="17" width="36" height="18" rx="3"/><rect x="6" y="44" width="36" height="18" rx="3"/><rect x="46" y="44" width="36" height="18" rx="3"/></g><text x="22" y="27">ЦІНОВА КОНКУРЕНЦІЯ</text><text x="7" y="54">ДОБРОСОВІСНА</text><text x="45" y="54">НЕДОБРОСОВІСНА</text></svg></div>
            <div class="slot"><svg viewBox="0 0 85 68" font-size="4"><text x="16" y="6">МЕТОДИ ЦІНОВОЇ</text><text x="20" y="11">КОНКУРЕНЦІЇ</text><path d="M7 17h73v48H7zM43 17v48M7 24h73M7 36h73M7 52h73" fill="none" stroke="#000"/><g font-size="3"><text x="12" y="22">МЕТОДИ</text><text x="47" y="22">ХАРАКТЕР</text><text x="8" y="28">ЦІНОВИЙ СПОСІБ</text><text x="45" y="28">ЗНИЖЕННЯ ЦІН</text><text x="45" y="32">ПОКУПЦЯМ</text><text x="8" y="40">ДЕМПІНГ</text><text x="45" y="40">ПРОДАЖ ТОВАРІВ</text><text x="45" y="44">ЗА ЦІНАМИ</text><text x="8" y="56">ДИСКРИМІНАЦІЯ</text><text x="45" y="56">РІЗНІ ЦІНИ НА</text><text x="45" y="60">ТОВАР</text></g></svg></div>
          </div>
          <div class="vbar"><i class="arr"></i><div style="flex:2 1 0"></div><div class="grip" style="height:111px"><svg width="8" height="8"><path d="M0 .5h8M0 3.500h8M0 6.500h8" stroke="#65758d"/></svg></div><div style="flex:2 1 0;margin-top:25px"></div><i class="arr dn"></i></div>
        </div>
      </aside>
      <div class="split"></div>
      <div class="d-flex flex-column flex-grow-1 ruler-bg" style="min-width:0">
        <div style="padding:6px 32px 10px 29px"><div class="hruler"><div><span>63</span><span>56</span><span>49</span><span>42</span><span>35</span><span>28</span><span>21</span><span>14</span><span>7</span><span>0</span><span>7</span><span>14</span><span>21</span><span>28</span><span>35</span><span>42</span><span>49</span><span>56</span><span>63</span><span>70</span></div></div></div>
        <div class="d-flex flex-grow-1" style="min-height:0">
          <div class="vruler"><div><span>56</span><span>49</span><span>42</span><span>35</span><span>28</span><span>21</span><span>14</span><span>7</span><span>0</span><span>7</span><span>14</span><span>21</span><span>28</span><span>35</span><span>42</span><span>49</span><span>56</span></div></div>
          <div class="canvas flex-grow-1 overflow-hidden">
            <article class="slide h-100"><div class="slide-in">
              <h1>ЕВОЛЮЦІЯ МОНОПОЛІСТИЧНИХ<br>ОБ’ЄДНАНЬ</h1>
              <div class="d-flex gap-2" style="padding-top:14px">
                <div class="chev"><svg viewBox="0 0 184 73" preserveAspectRatio="none"><path d="M1 1h137l45 35-45 36H1z" fill="#bbe0e3" stroke="#000"/></svg><span>КОМБІНУВАННЯ</span></div>
                <div class="chev"><svg viewBox="0 0 184 73" preserveAspectRatio="none"><path d="M1 1h137l45 35-45 36H1z" fill="#bbe0e3" stroke="#000"/></svg><span>ДИВЕРСИФІКАЦІЯ</span></div>
                <div class="chev"><svg viewBox="0 0 184 73" preserveAspectRatio="none"><path d="M1 1h137l45 35-45 36H1z" fill="#bbe0e3" stroke="#000"/></svg><span>КОНГЛОМЕРАТ</span></div>
              </div>
              <h2>ВИДИ КОМБІНУВАННЯ</h2>
              <table class="kinds"><tr><td><i>ГОРИЗОНТАЛЬНЕ –</i><div style="padding-top:28px">ВИРОБНИЦТВО РІЗНОМАНІТНОЇ<br>ПРОДУКЦІЇ НА ЄДИНІЙ<br>СИРОВИННІЙ ОСНОВІ</div></td><td><i>ВЕРТИКАЛЬНЕ –</i><div style="padding-top:20px">ОХОПЛЕННЯ МОНОПОЛІЯМИ<br>ВСЬОГО ВИРОБНИЧОГО<br>ПРОЦЕСУ ВІД ДОБУВАННЯ<br>СИРОВИНИ ДО ВИПУСКУ<br>ГОТОВОЇ, КІНЦЕВОЇ ПРОДУКЦІЇ</div></td></tr></table>
            </div></article>
          </div>
          <div class="vbar"><i class="arr invisible"></i><div style="flex:140 1 0"></div><div class="grip" style="height:18px"><svg width="8" height="8"><path d="M0 .5h8M0 3.500h8M0 6.500h8" stroke="#65758d"/></svg></div><div style="flex:283 1 0"></div><i class="arr dn"></i><svg width="11" height="36" viewBox="0 0 11 36"><path d="M5.500 10l5 5h-10zM5.500 15l5 5h-10zM5.500 30l5-5h-10zM5.500 35l5-5h-10z" fill="#000"/></svg></div>
          <div style="width:3px;flex-shrink:0;background:#a5c8f5"></div>
        </div>
        <div class="hbar d-flex align-items-center" style="margin-right:18px"><svg width="53" height="12"><path d="M11 1v10L6 6z" fill="#3f5b86"/></svg><div class="hgrip flex-grow-1 d-flex justify-content-center align-items-center"><svg width="8" height="8"><path d="M.5 0v8M3.500 0v8M6.500 0v8" stroke="#65758d"/></svg></div><svg width="28" height="12"><path d="M18 1v10l5-5z" fill="#3f5b86"/></svg></div>
        <div style="height:5px;background:#a9cdff"></div>
        <div class="d-flex"><div class="notes flex-grow-1" style="padding-left:10px">Заметки к слайду</div><div class="vbar justify-content-between" style="margin-right:3px"><i class="arr"></i><i class="arr dn"></i></div></div>
      </div>
    </div>
    <footer class="status d-flex" style="height:19px">
      <div class="justify-content-end overflow-hidden" style="width:64px;padding-right:9px">Слайд 8 из 22</div>
      <div class="justify-content-center" style="width:180px">"Оформление по умолчанию"</div><div style="padding:0 9px;width:114px">русский</div><div class="flex-grow-1"></div>
      <div class="zoomer border-0" style="padding-left:6px"><div class="views"><button><svg width="12" height="12"><use href="#normv"/></svg></button><button><svg width="12" height="12"><use href="#sortv"/></svg></button><button><svg width="12" height="12"><use href="#showv"/></svg></button></div><span style="margin:0 9px 0 8px">10%</span><svg class="i16"><use href="#minus"/></svg><svg width="102" height="16" viewBox="0 0 102 16"><path d="M0 8h102M50 4v8" stroke="#e4efff"/><path d="M1 2h7v8l-3 3-4-3z" fill="#e8f0fb" stroke="#45679d"/></svg><svg class="i16"><use href="#plus"/></svg><svg class="i16 ms-2"><use href="#fit"/></svg><svg width="10" height="10" class="mx-2"><use href="#size"/></svg></div>
    </footer>
  </section>

  <!-- Word window -->
  <section class="word d-flex flex-column flex-grow-1" style="min-width:0">
    <header class="titlebar d-flex overflow-hidden">
      <div class="qat d-flex align-items-start flex-shrink-0" style="width:59px;height:14px"><svg width="14" height="10" viewBox="0 4 16 12" style="color:#2f62b8"><use href="#undo" width="16" height="16"/></svg><i class="car mt-1 ms-1"></i><svg width="14" height="10" class="ms-2" viewBox="0 5 16 12" style="color:#a5afbd"><use href="#redo" width="16" height="16"/></svg></div>
      <i class="car ms-2 mt-1"></i>
      <div class="flex-grow-1 text-nowrap" style="padding-left:12px;line-height:16px;margin-top:-5px">YeKZAMYeNATsDNI_PITANNYa_Z_KURSU_1.doc [Режим ограниченной функциональности] - Micr...</div>
      <svg width="30" height="16"><path d="M2 6h6M26 2h8v6h-8z" stroke="#8c939e" stroke-width="2" fill="none"/></svg>
    </header>
    <nav class="tabs d-flex align-items-end">
      <button class="on border-start-0 overflow-hidden d-flex justify-content-end align-items-center" style="width:38px;padding-right:10px">Главная</button>
      <button style="width:74px">Вставка</button><button style="width:130px">Разметка страницы</button><button style="width:70px">Ссылки</button>
      <button style="width:76px">Рассылки</button><button style="width:122px">Рецензирование</button><button style="width:48px">Вид</button>
    </nav>
    <div class="ribbon d-flex">
      <div class="grp d-flex flex-column border-start-0" style="width:30px">
        <div class="flex-grow-1 stack overflow-hidden"><svg class="i16 opacity-50" style="margin-left:-5px"><use href="#cut"/></svg><svg class="i16 opacity-50" style="margin-left:-3px"><use href="#copy"/></svg><svg class="i16" style="margin-left:-2px"><use href="#brush"/></svg></div>
        <footer class="d-flex justify-content-end overflow-hidden" style="padding-right:20px">Буфер обмена<svg class="launch"><use href="#launch"/></svg></footer>
      </div>
      <div class="grp d-flex flex-column lit" style="width:189px">
        <div class="g-body rows flex-grow-1">
          <div class="gap-0"><select class="combo" aria-label="Шрифт" style="width:126px"><option>Courier New</option></select><select class="combo" aria-label="Размер" style="width:55px"><option>10</option></select></div>
          <div><div class="tools ser"><button>Ж</button><button><i>К</i></button><button class="wide"><u>Ч</u><i class="car ms-1"></i></button><button style="width:26px"><s style="font-size:12px">abc</s></button><button>x<sub>2</sub></button><button>x<sup>2</sup></button></div><div class="tools"><button><svg class="i16"><use href="#clear"/></svg></button></div></div>
          <div><div class="tools ser"><button class="wide"><span style="border-bottom:3px solid #ff0;line-height:13px;font-size:12px;font-weight:normal;font-family:inherit">ab</span><i class="car"></i></button><button class="wide"><span style="border-bottom:3px solid #000;line-height:14px;color:#2f579c;padding:0 2px">A</span><i class="car"></i></button><button class="mid">Aa<i class="car"></i></button></div><div class="tools ser"><button>A˄</button><button style="font-size:11px">A˅</button></div></div>
        </div>
        <footer>Шрифт<svg class="launch"><use href="#launch"/></svg></footer>
      </div>
      <div class="grp d-flex flex-column lit" style="width:155px">
        <div class="g-body rows flex-grow-1">
          <div><div class="tools"><button class="wide"><svg class="i16"><use href="#bul"/></svg><i class="car"></i></button><button class="wide"><svg class="i16"><use href="#numl"/></svg><i class="car"></i></button><button class="mid"><svg class="i16"><use href="#multi"/></svg><i class="car"></i></button></div><div class="tools"><button style="width:22px"><svg class="i16"><use href="#out"/></svg></button><button style="width:22px"><svg class="i16"><use href="#in"/></svg></button></div></div>
          <div><div class="tools"><button class="hot"><svg class="i16"><use href="#al"/></svg></button><button><svg class="i16"><use href="#ac"/></svg></button><button><svg class="i16"><use href="#ar"/></svg></button><button><svg class="i16"><use href="#aj"/></svg></button></div><div class="tools"><button class="mid"><svg class="i16"><use href="#sp"/></svg><i class="car"></i></button></div></div>
          <div><div class="tools"><button class="wide"><svg class="i16"><use href="#bucket"/></svg><i class="car"></i></button><button class="wide"><svg class="i16"><use href="#bord"/></svg><i class="car"></i></button></div><div class="tools"><button><svg class="i16"><use href="#sort"/></svg></button></div><div class="tools ser"><button style="font-size:16px">¶</button></div></div>
        </div>
        <footer>Абзац<svg class="launch"><use href="#launch"/></svg></footer>
      </div>
      <div class="grp d-flex flex-column" style="width:152px">
        <div class="flex-grow-1 d-flex justify-content-around">
          <button class="big"><svg class="i32 mt-1"><use href="#bigA"/></svg><span class="pt-1">Экспресс-стили</span><i class="car mt-1"></i></button>
          <button class="big"><svg class="i32 mt-1"><use href="#twoA"/></svg><span class="pt-1">Изменить</span><span class="d-flex align-items-center gap-1">стили <i class="car"></i></span></button>
        </div>
        <footer class="pe-4">Стили<svg class="launch"><use href="#launch"/></svg></footer>
      </div>
      <button class="grp tall big pt-1" style="width:93px"><span class="tile"><svg class="i16"><use href="#bino"/></svg></span><span class="pt-1">Редактирование</span><i class="car mt-1"></i></button>
    </div>
    <div class="ruler-bg flex-shrink-0 overflow-hidden" style="height:26px;padding-left:100px">
      <svg width="549" height="26" viewBox="0 0 549 26" font-size="10" fill="#333c52" text-anchor="middle">
        <path d="M10 7h399v13H10z" fill="#b5cdf0" stroke="#c8dcf6"/><path d="M49 7h339v13H49z" fill="#fff"/>
        <path d="M19.500 11v5M38.500 11v5M58 11v5M77 11v5M96 11v5M115 11v5M133 11v5M152 11v5M171 11v5M190 11v5M209 11v5M227 11v5M246 11v5M265 11v5M284 11v5M303 11v5M321 11v5M340 11v5M359 11v5M378 11v5M397 11v5" stroke="#4a5770"/>
        <text x="10" y="17">2</text><text x="86" y="17">2</text><text x="124" y="17">4</text><text x="161" y="17">6</text><text x="199" y="17">8</text><text x="237" y="17">10</text><text x="275" y="17">12</text><text x="312" y="17">14</text><text x="350" y="17">16</text>
        <path d="M79 14v6h5M110 14v6h5M140 14v6h5M171 14v6h5M202 14v6h5M232 14v6h5M263 14v6h5M294 14v6h5M324 14v6h5M354 14v6h5M386 14v6h5M416 14v6h5M447 14v6h5M477 14v6h5M508 14v6h5M538 14v6h5" fill="none" stroke="#2a4265" stroke-width="2"/>
        <path d="M58 4h8v4l-4 4 4 5v3h-8v-3l4-5-4-4zM58 21h8v4h-8zM385 20v-4l4-4 4 4v4z" fill="#e9eff8" stroke="#5878a8"/>
      </svg>
    </div>
    <div class="desk flex-grow-1 d-flex flex-column" style="min-height:0">
      <div class="sheet flex-shrink-0" style="height:268px">
        <p style="height:22px;line-height:10px"><s style="text-decoration:underline wavy #c22">вартості</s>.</p>
        <p class="fill">36. Сутність та основні ознаки монополізму.Монополія природна та штучна.</p>
        <p class="fill" style="padding-left:12px">Монополістичні союзи, їх характеристика. Еволюція монополістичних</p>
        <p style="padding-left:12px">об’єднань.</p>
        <div class="caps">
        <p class="fill">МОНОПОЛІЯ У ВУЗЬКОМУ РОЗУМІННІ – ЦЕ РИНКОВЕ ПАНУВАННЯ ОДНОГО</p>
        <p>ПРОДАВЦЯ.</p>
        <p class="fill">У ШИРОКОМУ ЗНАЧЕННІ – ПАНУЮЧЕ ПОЛОЖЕННЯ ОДНІЄЇ ЧИ ГРУПИ ОСІБ</p>
        <p>У БУДЬ-ЯКІЙ СФЕРІ ДІЯЛЬНОСТІ.</p>
        <p>В ЕКОНОМІЦІ РОЗРІЗНЯЮТЬ 4 ВАРІАНТИ МОНОПОЛЬНОГО ПОЛОЖЕННЯ:</p>
        <ol><li><span class="num">1.</span>ВЛАСНЕ МОНОПОЛІЮ.</li><li><span class="num">2.</span>ОЛІГОПОЛІЮ.</li><li><span class="num">3.</span>МОНОПСОНІЮ.</li><li><span class="num">4.</span>ОЛІГОПСОНІЮ.</li></ol>
        </div>
      </div>
      <div class="sheet mt-1 flex-grow-1 border-top border-dark border-bottom-0" style="padding-top:38px;min-height:0">
        <svg width="131" height="103" viewBox="0 0 131 103" font-family="Liberation Sans,sans-serif" font-weight="bold" font-style="normal" text-anchor="middle" fill="#222" font-size="6">
          <path d="M1.500 0v102" stroke="#bbb" stroke-dasharray="2 4"/><path d="M4 0v103" stroke="#a0b8e8" stroke-width="2"/>
          <g font-size="8"><text x="66" y="5">МОНОПОЛІЯ ПРИРОДНА ТА</text><text x="66" y="15">ШТУЧНА</text></g>
          <path d="M67 42v20M58 62h17M31 71v9M103 71v9" stroke="#b5b5b5"/>
          <g fill="#bbe0e3" stroke="#8aa6a8"><rect x="40" y="24" width="54" height="19" rx="3"/><rect x="4" y="52" width="54" height="19" rx="3"/><rect x="76" y="52" width="54" height="19" rx="3"/><rect x="4" y="80" width="54" height="19" rx="3"/><rect x="76" y="80" width="54" height="19" rx="3"/></g>
          <text x="67" y="36">МОНОПОЛІЯ</text><g font-style="italic"><text x="31" y="64">ПРИРОДНА</text><text x="103" y="64">ШТУЧНА</text></g><text x="37" y="92">ЄКТИВНО ЗУМОВЛЕНА</text><text x="103" y="92">СТВОРЮЄТЬСЯ</text>
        </svg>
        <ol style="padding-top:19px"><li>37. Позитивні та негативні риси монополії та її регулювання.</li><li>38. Сутність конкуренції та її функції. Економічний закон конкуренції.</li><li>39. Цінова та нецінова конкуренція: сутність, методи і способи ведення.</li><li>40. Нечесна конкуренція: сутність, методи і способи ведення.</li><li>41. Досконала та недосконала конкуренція.</li><li>42. Монополія та конкуренція: моделі сучасного ринку.</li><li>43. Земля як об’єкт економічних відносин. Земельна рента.</li></ol>
      </div>
    </div>
    <footer class="status d-flex" style="height:22px">
      <div class="justify-content-end overflow-hidden" style="width:42px;padding-right:8px">Страница: 4 из 28</div>
      <div style="padding:0 8px;width:110px">Число слов: 7 063</div>
      <div style="width:113px;gap:17px;padding-left:8px"><svg class="i16"><path d="M1 8l7-3 6 5-7 4z" fill="#e9f0fb" stroke="#3d5c96"/><path d="M1 8v3l6 5v-3" fill="#5c80bd"/><path d="M7 1l7 8M14 1L8 9" stroke="#e33d20" stroke-width="2"/></svg>русский</div><div class="flex-grow-1"></div>
      <div class="zoomer border-0" style="padding-left:5px;width:251px"><div class="views"><button style="background:#fbd68a"><svg width="12" height="12"><use href="#docv"/></svg></button><button><svg width="12" height="12"><use href="#bookv"/></svg></button><button><svg width="12" height="12"><use href="#webv"/></svg></button><button><svg width="12" height="12"><use href="#outv"/></svg></button><button><svg width="12" height="12" viewBox="0 0 16 16"><use href="#aj"/></svg></button></div><span class="mx-2">50%</span><svg class="i16"><use href="#minus"/></svg><svg width="98" height="16" viewBox="0 0 98 16"><path d="M0 8h98M53 4v8" stroke="#e4efff"/><path d="M22 2h7v8l-3 3-4-3z" fill="#e8f0fb" stroke="#45679d"/></svg></div>
    </footer>
    <div class="d-flex bg-white overflow-hidden flex-shrink-0" style="height:12px">
      <div class="zoomer d-flex gap-2 overflow-hidden" style="width:52px;padding-left:14px"><svg width="16" height="12" viewBox="0 4 16 12"><use href="#plus" width="16" height="16"/></svg><svg width="10" height="10"><use href="#size"/></svg></div>
      <svg class="ms-auto" width="16" height="12"><path d="M1 0h14v12H1z" fill="#dedede" stroke="#aaa"/><path d="M4 2l4 4 4-4" fill="none" stroke="#555" stroke-width="2"/></svg>
    </div>
  </section>
</main>

<!-- taskbar -->
<footer class="taskbar d-flex align-items-center">
  <button class="start h-100 d-flex align-items-center"><svg class="i16 ms-2"><use href="#flag"/></svg>пуск</button>
  <div class="d-flex flex-grow-1 gap-1" style="padding:0 11px 0 10px;min-width:0">
    <button class="task"><svg class="i16"><use href="#ff"/></svg>ринок тов...</button>
    <button class="task alert-on"><svg class="i16"><use href="#ff"/></svg>Загрузки</button>
    <button class="task"><svg class="i16"><use href="#wd"/></svg>1_modul.d...</button>
    <button class="task"><svg class="i16"><use href="#wd"/></svg>YeKZAMYe...</button>
    <button class="task"><svg class="i16"><use href="#wd"/></svg>1-90.doc [...</button>
    <button class="task"><svg class="i16"><use href="#wd"/></svg>Ekonomiche...</button>
    <button class="task"><svg class="i16"><use href="#fold"/></svg>C:\Docume...</button>
    <button class="task now"><svg class="i16"><use href="#pp"/></svg>MONOPOLI...</button>
    <button class="task"><svg class="i16"><use href="#pp"/></svg>KAPITAL_S...</button>
    <button class="task"><svg class="i16"><use href="#pp"/></svg>PIDPRIYeM...</button>
  </div>
  <button class="lang">EN</button>
  <div class="tray h-100 d-flex align-items-center" style="margin-left:18px;width:111px">
    <svg width="64" height="18" viewBox="0 0 64 18" style="margin-left:-7px"><circle cx="7" cy="9" r="7" fill="#4a4a4a"/><path d="M9 5L5 9l4 4" fill="none" stroke="#ddd" stroke-width="2"/><path d="M18 14v-3h2v3zM21 14v-5h2v5zM24 14V7h2v7z" fill="#7fdc7f"/><path d="M27 14V5h2v9zM30 14V3h2v11z" fill="#c9cfc9"/><circle cx="43" cy="9" r="7" fill="#f58a1e"/><circle cx="43" cy="9" r="3.500" fill="none" stroke="#fff" stroke-width="2"/><path d="M46 9v5" stroke="#fff" stroke-width="2"/><path d="M53 2h10v11H53z" fill="#888" stroke="#12129a" stroke-width="2"/><path d="M52 16h4m2 0h4" stroke="#5a5af0" stroke-width="2"/></svg>
    <span style="padding-left:12px">18:36</span>
  </div>
</footer>
<script src="https://cdn.jsdelivr.net/npm/bootstrap@5.3.0/dist/js/bootstrap.bundle.min.js"></script>
</body>
</html>
